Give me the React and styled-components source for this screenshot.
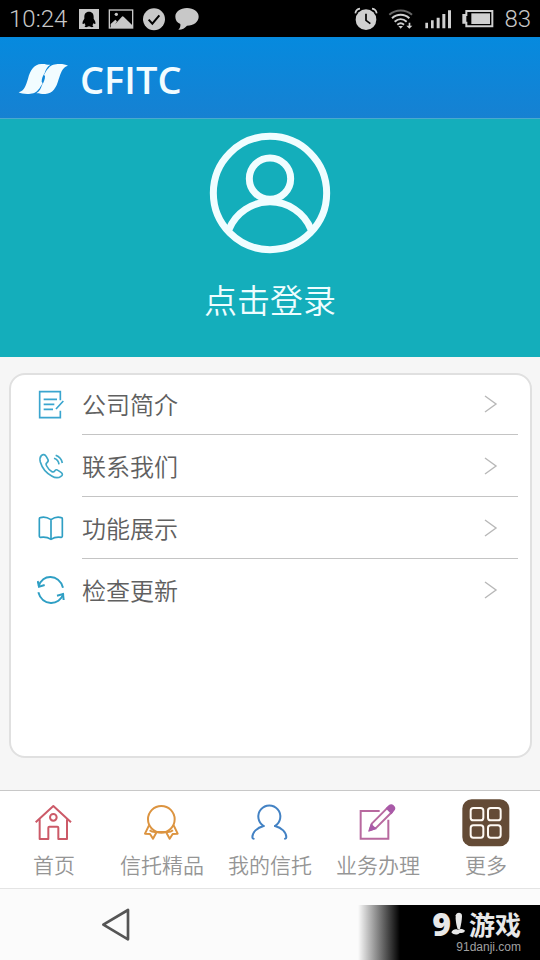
import React from 'react';
import styled, { createGlobalStyle } from 'styled-components';

const GlobalStyle = createGlobalStyle`
  * {
    box-sizing: border-box;
  }
  body {
    margin: 0;
    background: #f6f6f6;
    font-family: 'Noto Sans CJK SC', sans-serif;
    font-weight: 350;
  }
  svg {
    display: block;
    flex: none;
  }
`

/* STATUS BAR ICONS */

const QQIcon = () => (
  <svg width="22" height="22" viewBox="0 0 66 66">
    <rect x="3" y="3" width="60" height="60" fill="#c8c8c8" />
    <path fill="#000" d="M33 11c-10 0-14 7-14 16v5c-3 5-7 10-5 16 2 1 4-2 5-3 1 3 2 5 4 7-3 2-4 4-2 5 4 1 8 0 12-2 4 2 8 3 12 2 2-1 1-3-2-5 2-2 3-4 4-7 1 1 3 4 5 3 2-6-2-11-5-16v-5c0-9-4-16-14-16z" />
  </svg>
)

const PictureIcon = () => (
  <svg width="26" height="22" viewBox="0 0 78 66">
    <rect x="4" y="6" width="70" height="54" fill="none" stroke="#c8c8c8" strokeWidth="4" />
    <circle cx="25" cy="19" r="5" fill="#c8c8c8" />
    <path fill="#c8c8c8" d="M8 48l14-13 5 5-6 9 22-24 4 1 26 26v8H8z" />
  </svg>
)

const CheckIcon = () => (
  <svg width="24" height="24" viewBox="0 0 72 72">
    <circle cx="36" cy="37" r="33" fill="#c8c8c8" />
    <path d="M20 38l11 12 21-25" fill="none" stroke="#000" strokeWidth="6" />
  </svg>
)

const BubbleIcon = () => (
  <svg width="26" height="24" viewBox="0 0 78 72">
    <path fill="#c8c8c8" d="M39 3C19 3 4 14 4 29c0 10 5 18 15 22 1 7-1 13-6 17 12 0 20-5 26-12 20 0 35-12 35-27S59 3 39 3z" />
  </svg>
)

const AlarmIcon = () => (
  <svg width="24" height="24" viewBox="0 0 72 72">
    <circle cx="36" cy="38" r="31" fill="#d0d0d0" />
    <path d="M36 20v20l13 10" fill="none" stroke="#000" strokeWidth="5" />
    <path d="M4 19C5 11 10 6 18 5M54 5c8 1 13 6 14 14" fill="none" stroke="#d0d0d0" strokeWidth="5" />
  </svg>
)

const WifiIcon = () => (
  <svg width="26" height="22" viewBox="0 0 78 66">
    <g fill="none" strokeWidth="6">
      <path d="M4 20C23 3 53 3 72 20" stroke="#666" />
      <path d="M12 31c15-14 37-14 52 0" stroke="#d0d0d0" />
      <path d="M20 41c11-10 25-10 36 0" stroke="#d0d0d0" />
      <path d="M28 50c6-5 14-5 20 0" stroke="#d0d0d0" />
    </g>
    <path fill="#d0d0d0" d="M31 54h14l-7 8zM62 44h5v9h6l-9 9-9-9h7z" />
  </svg>
)

const SignalIcon = () => (
  <svg width="28" height="22" viewBox="0 0 84 66">
    <path fill="#d0d0d0" d="M4 44h8v17H4zM21 37h8v24h-8zM38 29h9v32h-9zM55 18h9v43h-9zM72 7h9v54h-9z" />
  </svg>
)

const BatteryIcon = () => (
  <svg width="32" height="20" viewBox="0 0 96 60">
    <path d="M13 6h78v46H13V41H4V18h9z" fill="none" stroke="#d0d0d0" strokeWidth="6" />
    <path d="M5 18h8v23H5z" fill="#d0d0d0" />
    <path d="M28 13h56v32H28z" fill="#d0d0d0" />
  </svg>
)

/* LOGO */

const RIBBON = 'M2 87C20 82 24 64 30 46 37 20 48 3 70 2 82 1 88 5 97 4 86 11 83 20 80 29 74 38 71 46 71 55L74 60C68 68 67 74 60 80 52 90 42 92 28 92 16 92 8 90 2 87z'

const LogoMark = () => (
  <svg width="52" height="32" viewBox="0 0 156 94">
    <path d={RIBBON} fill="#f2fcff" />
    <path d={RIBBON} fill="#f2fcff" transform="rotate(180 76 47)" />
  </svg>
)

const AvatarIcon = () => (
  <svg width="122" height="122" viewBox="0 0 366 366" fill="none" stroke="#f0fdff" strokeWidth="21">
    <circle cx="183" cy="183" r="170" />
    <circle cx="183" cy="140" r="62" />
    <path d="M60 292a133 133 0 0 1 246 0" />
  </svg>
)

/* MENU ICONS */

const DocIcon = () => (
  <svg width="28" height="30" viewBox="0 0 84 90" fill="none" stroke="#3aa5cf" strokeWidth="5">
    <path d="M70 31V5H8v78h62V62" />
    <path d="M20 28h40M20 43h32M20 58h28M79 33L57 57" />
  </svg>
)

const PhoneIcon = () => (
  <svg width="28" height="30" viewBox="0 0 84 90" fill="none" stroke="#3fa8c8" strokeWidth="5" strokeLinejoin="round">
    <path d="M13 14c5-5 11-4 15 3l5 9c2 4 0 7-4 10-3 2-2 5 0 9 4 8 9 13 16 17 4 2 6 1 8-2 3-4 6-5 10-2l9 6c6 4 5 9 0 12-8 6-18 5-28-1C28 66 15 50 10 33c-2-8-1-15 3-19z" />
    <path d="M51 22c9 3 14 9 15 18M56 13c11 4 18 12 20 23" />
  </svg>
)

const BookIcon = () => (
  <svg width="28" height="30" viewBox="0 0 84 90" fill="none" stroke="#2f9fc4" strokeWidth="5" strokeLinejoin="round">
    <path d="M42 20C31 13 20 11 10 14c-2 0-3 1-3 3v53c0 2 1 3 3 3 12-2 23 0 32 6 9-6 20-8 31-6 2 0 3-1 3-3V17c0-2-1-3-3-3-10-3-21-1-31 6zM42 20v59" />
  </svg>
)

const RefreshIcon = () => (
  <svg width="28" height="30" viewBox="0 0 84 90" fill="none" stroke="#2f9fc4" strokeWidth="6">
    <path d="M5 34C15 -4 66 -4 78 38M79 56C68 94 15 94 4 52" />
    <path d="M2 18l4 17 17-5M60 62l18-5 2 18" />
  </svg>
)

const Chevron = () => (
  <svg width="14" height="18" viewBox="0 0 14 18" fill="none" stroke="#b8b8b8" strokeWidth="1.4">
    <path d="M1 1l11 8-11 8" />
  </svg>
)

/* TAB ICONS */

const HomeIcon = () => (
  <svg width="38" height="38" viewBox="2 3 114 114" fill="none" stroke="#cc5a68" strokeWidth="6" strokeLinejoin="round">
    <path d="M4 58L57 9l53 49" />
    <path d="M16 49v59h26V74c0-2 1-3 3-3h24c2 0 3 1 3 3v34h26V49" />
    <circle cx="57" cy="43" r="10" />
  </svg>
)

const BadgeIcon = () => (
  <svg width="38" height="38" viewBox="2 3 114 114" fill="none" stroke="#dc9440" strokeWidth="6" strokeLinejoin="round">
    <circle cx="57" cy="49" r="40" />
    <path d="M20 67L8 92l15 1 9 14 11-20h28l11 20 9-14 15-1-12-25M22 82c6 5 12 6 20 5M92 82c-6 5-12 6-20 5" />
  </svg>
)

const UserIcon = () => (
  <svg width="38" height="38" viewBox="2 3 114 114" fill="none" stroke="#4382c4" strokeWidth="6" strokeLinecap="round">
    <path d="M40 69a33 33 0 1 1 34 0" />
    <path d="M40 69C20 74 6 88 6 103c0 2 1 4 4 4M74 69c20 5 34 19 34 34 0 2-1 4-4 4" />
  </svg>
)

const EditIcon = () => (
  <svg width="38" height="38" viewBox="4 3 114 114" fill="none" stroke="#b8699f" strokeWidth="6">
    <path d="M66 24H9v83h83V50" />
    <path d="M36 82l7-21 47-47 13 13-47 47z" strokeLinejoin="round" />
    <path d="M88 16l7-7c4-4 9-3 12 1 4 4 4 8 0 12l-6 7zM36 82l5-15 11 10z" fill="#a95aa8" stroke="#a95aa8" />
  </svg>
)

const MoreIcon = () => (
  <svg width="48" height="48" viewBox="0 0 144 144">
    <rect x="1" y="1" width="141" height="141" rx="28" fill="#644b36" />
    <g fill="none" stroke="#fffaf4" strokeWidth="6">
      <rect x="26" y="27" width="38" height="37" rx="8" />
      <rect x="78" y="27" width="38" height="37" rx="8" />
      <rect x="26" y="79" width="38" height="37" rx="8" />
      <rect x="78" y="79" width="38" height="37" rx="8" />
    </g>
  </svg>
)

const BackIcon = () => (
  <svg width="30" height="34" viewBox="0 0 90 102" fill="none" stroke="#555" strokeWidth="8" strokeLinejoin="round">
    <path d="M81 6v88L7 50z" />
  </svg>
)

const BootIcon = () => (
  <svg width="14" height="24" viewBox="0 0 42 72" fill="#e8e8e8">
    <path d="M14 10c3-10 18-10 19 1 0 13-3 27-6 40l-7 1c-4-13-7-28-6-42z" />
    <path d="M1 61c4-9 12-11 19-8 8-4 18-2 22 3-3 8-10 6-16 7-7 7-19 6-25-2z" />
  </svg>
)

const rows = [
  { text: '公司简介', icon: <DocIcon /> },
  { text: '联系我们', icon: <PhoneIcon /> },
  { text: '功能展示', icon: <BookIcon /> },
  { text: '检查更新', icon: <RefreshIcon /> },
]

const tabs = [
  { text: '首页', icon: <HomeIcon /> },
  { text: '信托精品', icon: <BadgeIcon /> },
  { text: '我的信托', icon: <UserIcon /> },
  { text: '业务办理', icon: <EditIcon /> },
  { text: '更多', icon: <MoreIcon /> },
]

const App = () => {
  return (
    <Page>
      <GlobalStyle />
      <StatusBar>
        <StatusText>10:24</StatusText>
        <StatusGroup $gap="8px">
          <QQIcon />
          <PictureIcon />
          <CheckIcon />
          <BubbleIcon />
        </StatusGroup>
        <StatusGroup $gap="10px" $right>
          <AlarmIcon />
          <WifiIcon />
          <SignalIcon />
          <BatteryIcon />
          <StatusText>83</StatusText>
        </StatusGroup>
      </StatusBar>

      <Header>
        <LogoMark />
        <LogoText>CFITC</LogoText>
      </Header>

      <LoginButton type="button">
        <AvatarIcon />
        <LoginText>点击登录</LoginText>
      </LoginButton>

      <Content>
        <Card>
          {rows.map((row) => (
            <Row href="#" key={row.text}>
              {row.icon}
              <RowBody>
                {row.text}
                <Chevron />
              </RowBody>
            </Row>
          ))}
        </Card>
      </Content>

      <TabBar>
        {tabs.map((tab) => (
          <Tab href="#" key={tab.text}>
            <TabIcon>{tab.icon}</TabIcon>
            {tab.text}
          </Tab>
        ))}
      </TabBar>

      <SystemBar>
        <BackButton type="button" aria-label="返回">
          <BackIcon />
        </BackButton>
        <Watermark>
          <Brand>
            <BrandNine>9</BrandNine>
            <BootIcon />
            <BrandName>游戏</BrandName>
          </Brand>
          <Site>91danji.com</Site>
        </Watermark>
      </SystemBar>
    </Page>
  )
}

const Page = styled.div`
  min-height: 100vh;
  display: flex;
  flex-direction: column;
`

const StatusBar = styled.div`
  display: flex;
  align-items: center;
  gap: 11px;
  height: 37px;
  padding: 0 9px;
  background: #000;
`

const StatusText = styled.span`
  color: #c8c8c8;
  font-family: Roboto, sans-serif;
  font-size: 24px;
  line-height: 36px;
`

const StatusGroup = styled.div`
  display: flex;
  align-items: center;
  gap: ${({ $gap }) => $gap};
  margin-left: ${({ $right }) => ($right ? 'auto' : '0')};
`

const Header = styled.header`
  display: flex;
  align-items: center;
  gap: 10px;
  height: 82px;
  padding: 2px 18px 0;
  background: linear-gradient(#068ade, #1681d2);
  border-bottom: 1px solid #4aa9cf;
`

const LogoText = styled.h1`
  margin: 0;
  color: #f2fcff;
  font-family: 'Open Sans', sans-serif;
  font-size: 38px;
  font-weight: 600;
  line-height: 44px;
`

const LoginButton = styled.button`
  display: flex;
  flex-direction: column;
  align-items: center;
  gap: 20px;
  padding: 13px 0 33px;
  border: none;
  background: #14aebb;
`

const LoginText = styled.span`
  color: #effdff;
  font-family: 'Noto Sans CJK SC', sans-serif;
  font-size: 33px;
  font-weight: 350;
  line-height: 50px;
`

const Content = styled.main`
  flex: 1;
  display: flex;
  padding: 16px 8px 32px 9px;
  background: #f6f6f6;
`

const Card = styled.nav`
  flex: 1;
  background: #fff;
  border: 2px solid #e0e0e0;
  border-radius: 16px;
`

const RowBody = styled.span`
  flex: 1;
  display: flex;
  align-items: center;
  justify-content: space-between;
  height: 100%;
  padding-right: 20px;
  border-bottom: 1px solid #c4c4c4;
`

const Row = styled.a`
  display: flex;
  align-items: center;
  gap: 17px;
  height: 62px;
  padding: 0 12px 0 26px;
  color: #606060;
  font-size: 24px;
  line-height: 36px;
  text-decoration: none;

  &:first-child {
    height: 60px;
  }
  &:first-child ${RowBody} {
    padding-bottom: 2px;
  }
  &:last-child ${RowBody} {
    border-color: transparent;
  }
`

const TabBar = styled.nav`
  display: grid;
  grid-template-columns: repeat(5, 1fr);
  height: 99px;
  padding-top: 8px;
  background: #fff;
  border-top: 1px solid #c8c8c8;
  border-bottom: 1px solid #e4e4e4;
`

const Tab = styled.a`
  display: flex;
  flex-direction: column;
  align-items: center;
  gap: 1px;
  color: #959595;
  font-size: 21px;
  line-height: 32px;
  text-decoration: none;
`

const TabIcon = styled.span`
  display: flex;
  align-items: center;
  height: 48px;
`

const SystemBar = styled.footer`
  display: flex;
  align-items: flex-end;
  justify-content: space-between;
  height: 71px;
  background: #fbfbfb;
`

const BackButton = styled.button`
  align-self: center;
  margin-left: 101px;
  padding: 0;
  border: none;
  background: none;
`

const Watermark = styled.div`
  display: flex;
  flex-direction: column;
  align-items: flex-end;
  gap: 2px;
  width: 182px;
  height: 55px;
  padding: 5px 19px 0 0;
  background: linear-gradient(90deg, #fbfbfb, #000 42px);
`

const Brand = styled.div`
  display: flex;
  align-items: center;
  height: 28px;
  color: #e8e8e8;
`

const BrandNine = styled.span`
  font-family: 'Open Sans', sans-serif;
  font-size: 32px;
  font-weight: 800;
  line-height: 28px;
`

const BrandName = styled.span`
  margin-left: 4px;
  font-size: 26px;
  font-weight: 700;
  line-height: 26px;
`

const Site = styled.span`
  color: #a0a0a0;
  font-family: 'Liberation Sans', sans-serif;
  font-size: 12px;
  font-weight: 400;
  line-height: 14px;
`

export default App
